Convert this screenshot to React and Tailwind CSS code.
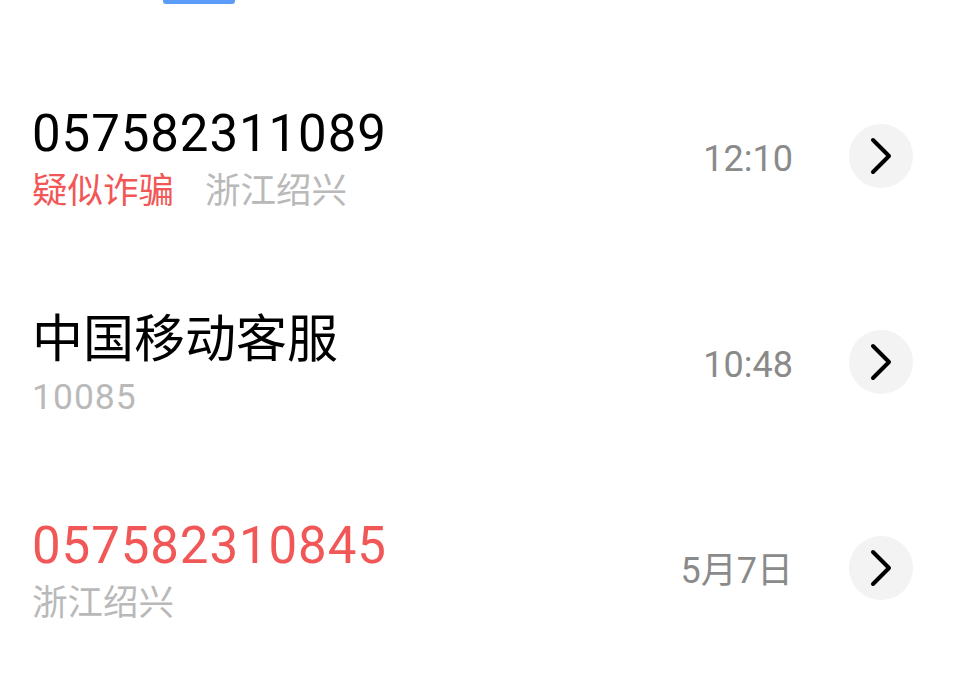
const calls = [
  { title: '057582311089', tag: '疑似诈骗', sub: '浙江绍兴', time: '12:10', danger: false, digits: true },
  { title: '中国移动客服', sub: '10085', time: '10:48', danger: false, digits: false },
  { title: '057582310845', sub: '浙江绍兴', time: '5月7日', danger: true, digits: true },
];

function Chevron() {
  return (
    <svg width="24" height="38" viewBox="0 0 24 38" fill="none">
      <path d="M4 3 L20 19 L4 35" stroke="#000" strokeWidth="4" strokeLinecap="round" strokeLinejoin="round" />
    </svg>
  );
}

function CallRow({ call }) {
  return (
    <div className="flex items-center h-[206px] pl-[32px] pr-[53px]">
      <div className="flex-1 flex flex-col pt-[6px]">
        <div
          className={`text-[51px] leading-[58px] ${call.digits ? 'tracking-[0.9px]' : ''} ${
            call.danger ? 'text-[#f25757]' : 'text-black'
          }`}
        >
          {call.title}
        </div>
        <div className="flex text-[35.5px] leading-[44px] mt-[6px]">
          {call.tag && <span className="text-[#f25757] mr-[31px]">{call.tag}</span>}
          <span className={`text-[#b9b9b9] ${call.digits ? '' : 'tracking-[1px]'}`}>{call.sub}</span>
        </div>
      </div>
      <div className="text-[36px] text-[#8a8a8a] mr-[56px] mt-[5px]">{call.time}</div>
      <div className="w-16 h-16 rounded-full bg-[#f3f3f3] flex items-center justify-center">
        <Chevron />
      </div>
    </div>
  );
}

export default function App() {
  return (
    <div className="w-[966px] h-[692px] bg-white overflow-hidden" style={{ fontFamily: 'Roboto, "Noto Sans CJK SC", sans-serif' }}>
      <div className="h-[53px]">
        <div className="ml-[163px] w-[72px] h-[4px] rounded-b-[3px] bg-[#5b9cf8]" />
      </div>
      {calls.map((c, i) => (
        <CallRow key={i} call={c} />
      ))}
    </div>
  );
}
